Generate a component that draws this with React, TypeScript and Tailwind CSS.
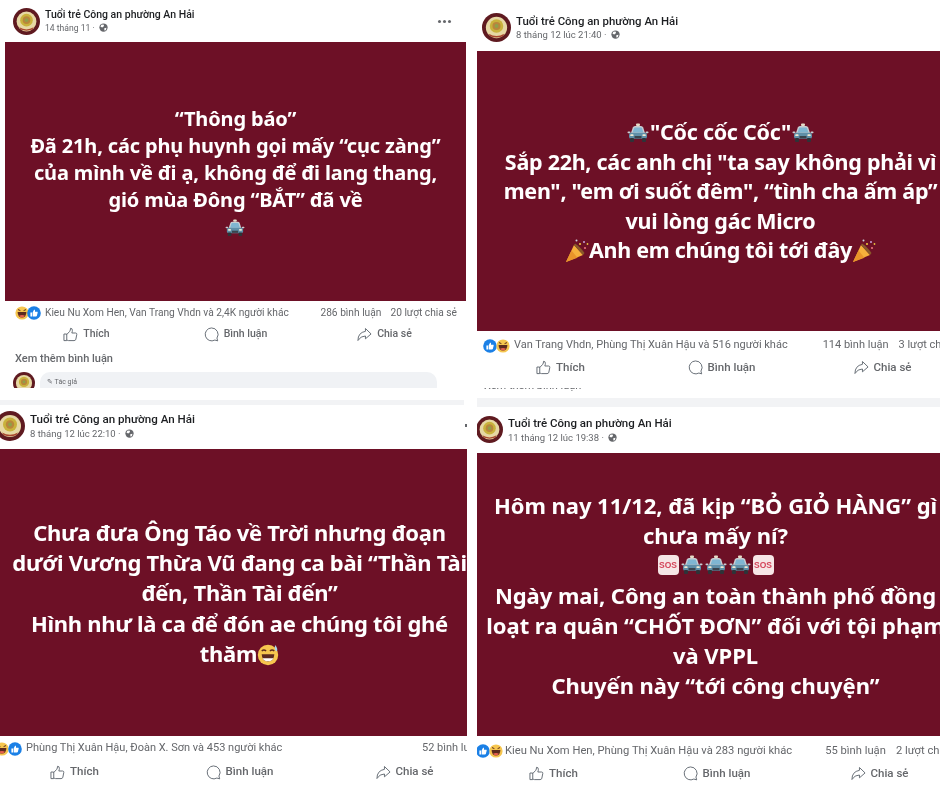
import React from "react";

const Taxi = ({ className = "w-[24px] h-[20px]" }: { className?: string }) => (
  <svg viewBox="0 0 24 20" className={`inline-block align-[-3px] ${className}`}>
    <rect x="10" y="0.5" width="4" height="2.5" rx="1" fill="#e6dcc8" />
    <path d="M5 10 L6.8 4.5 Q7.3 3 9 3 H15 Q16.7 3 17.2 4.5 L19 10 Z" fill="#c9ced2" />
    <path d="M6.6 9.6 L8 5.2 Q8.2 4.4 9 4.4 H15 Q15.8 4.4 16 5.2 L17.4 9.6 Z" fill="#7fb6d2" />
    <rect x="1.5" y="8.6" width="3" height="1.6" rx="0.8" fill="#c9ced2" />
    <rect x="19.5" y="8.6" width="3" height="1.6" rx="0.8" fill="#c9ced2" />
    <rect x="3" y="9.8" width="18" height="6" rx="2" fill="#5f8fa8" />
    <rect x="4" y="15" width="4" height="4" rx="1" fill="#2e3338" />
    <rect x="16" y="15" width="4" height="4" rx="1" fill="#2e3338" />
    <rect x="4.2" y="11.2" width="3.4" height="1.9" rx="0.9" fill="#f0ead2" />
    <rect x="16.4" y="11.2" width="3.4" height="1.9" rx="0.9" fill="#f0ead2" />
    <rect x="8.5" y="13" width="7" height="2.4" fill="#3a444d" />
  </svg>
);

const Popper = () => (
  <svg viewBox="0 0 24 24" className="inline-block w-[24px] h-[24px] align-[-5px]">
    <path d="M1 23 L9 6 L18 16 Z" fill="#f6b13c" />
    <path d="M1 23 L6.5 11.5 L12.5 18.8 Z" fill="#e9942a" />
    <path d="M9 6 L18 16 L19.5 14 Q15 7.5 10 4.5 Z" fill="#8a5a2a" />
    <circle cx="15" cy="5" r="1.1" fill="#e8c23a" />
    <circle cx="20" cy="9" r="1.1" fill="#e8717a" />
    <circle cx="11.5" cy="1.6" r="1" fill="#d0d4e0" />
    <circle cx="19" cy="3" r="1" fill="#c9a0d8" />
    <circle cx="22.5" cy="5" r="0.9" fill="#e8c23a" />
  </svg>
);

const Sos = () => (
  <span className="flex items-center justify-center w-[21px] h-[20px] mx-px bg-[#f6e6e6] rounded-[4px] text-[8.5px] leading-none font-bold text-[#d4455a] font-['Liberation_Sans',sans-serif]">
    SOS
  </span>
);

const Avatar = ({ className }: { className: string }) => (
  <svg viewBox="0 0 30 30" className={`shrink-0 ${className}`}>
    <circle cx="15" cy="15" r="15" fill="#5f1a20" />
    <circle cx="15" cy="15" r="11" fill="#e6d8a4" />
    <circle cx="15" cy="13.5" r="7" fill="#c9b23c" />
    <circle cx="15" cy="13.5" r="4.2" fill="#b9863c" />
    <circle cx="15" cy="13.5" r="2" fill="#8fa04a" />
    <path d="M7 21.5 Q15 26 23 21.5 L21.5 24 Q15 26.5 8.5 24 Z" fill="#a8452e" />
  </svg>
);

const Globe = () => (
  <svg viewBox="0 0 12 12" className="inline-block w-[9px] h-[9px] ml-[2px] align-[-1px]">
    <circle cx="6" cy="6" r="5.5" fill="#65676b" />
    <path d="M3 2.4 L6 2 L6.8 4 L4.4 6 L2 5 Z M7 7 L10 6.4 L9 9.6 L7.2 10 Z" fill="#fff" />
  </svg>
);

const Laugh = ({ className = "" }: { className?: string }) => (
  <svg viewBox="0 0 14 14" className={`w-[14px] h-[14px] shrink-0 ${className}`}>
    <circle cx="7" cy="7" r="6.6" fill="#f6c64f" />
    <path d="M2.6 6 H11.4 Q11.2 11.6 7 11.6 Q2.8 11.6 2.6 6 Z" fill="#5c2a1e" />
    <path d="M4 9.8 Q7 8 10 9.8 Q8.6 11.6 7 11.6 Q5.4 11.6 4 9.8 Z" fill="#e8614f" />
    <path d="M3 3.6 L5.4 4.6 M11 3.6 L8.6 4.6" stroke="#5c2a1e" strokeWidth="1" />
  </svg>
);

const Like = ({ className = "" }: { className?: string }) => (
  <svg viewBox="0 0 14 14" className={`w-[14px] h-[14px] shrink-0 ${className}`}>
    <circle cx="7" cy="7" r="6.8" fill="#1b80e6" />
    <path d="M3.4 6.6 H5 V10.4 H3.4 Z M5.6 6.4 L7.2 3.4 Q8.4 3.6 8 5.8 H10.4 Q10.9 6 10.6 7 L9.8 10 Q9.6 10.4 9 10.4 H5.6 Z" fill="#fff" />
  </svg>
);

const ThumbIcon = () => (
  <svg viewBox="0 0 16 16" className="w-[15px] h-[15px] shrink-0" fill="none" stroke="#606770" strokeWidth="1">
    <path d="M1 7.5 H4 V14.5 H1 Z" />
    <path d="M4 8 L7.2 4.6 Q8 3.4 8 1.4 Q10 1.2 10 3.6 Q10 5 9.4 6.4 H13.4 Q15 6.5 14.7 8 L13.7 13 Q13.4 14.5 11.8 14.5 H6 Q5 14.5 4 13.8" />
  </svg>
);

const CommentIcon = () => (
  <svg viewBox="0 0 16 16" className="w-[15px] h-[15px] shrink-0" fill="none" stroke="#606770" strokeWidth="1">
    <path d="M8 1 A6.9 6.9 0 1 0 11.6 13.9 L14.6 14.8 L13.8 11.8 A6.9 6.9 0 0 0 8 1 Z" />
  </svg>
);

const ShareIcon = () => (
  <svg viewBox="0 0 16 16" className="w-[15px] h-[15px] shrink-0" fill="none" stroke="#606770" strokeWidth="1">
    <path d="M9 1.6 L15 7.4 L9 12.6 V9.6 Q4 9.4 1 14.4 Q1 6 9 4.6 Z" strokeLinejoin="round" />
  </svg>
);

const Action = ({ icon, label, text }: { icon: React.ReactNode; label: string; text: string }) => (
  <div className="flex items-center justify-center gap-[5px]">
    {icon}
    <span className={`font-medium text-[#65676b] whitespace-nowrap ${text}`}>{label}</span>
  </div>
);

const Actions = ({ grid, text }: { grid: string; text: string }) => (
  <div className={`grid ${grid}`}>
    <Action icon={<ThumbIcon />} label="Thích" text={text} />
    <Action icon={<CommentIcon />} label="Bình luận" text={text} />
    <Action icon={<ShareIcon />} label="Chia sẻ" text={text} />
  </div>
);

const Name = ({ text }: { text: string }) => (
  <div className={`font-medium text-[#1c1e21] whitespace-nowrap ${text}`}>Tuổi trẻ Công an phường An Hải</div>
);

const Date_ = ({ label, text = "text-[9.5px]" }: { label: string; text?: string }) => (
  <div className={`leading-[13px] text-[#65676b] whitespace-nowrap ${text}`}>
    {label} · <Globe />
  </div>
);

const Post = ({ className, children }: { className: string; children: React.ReactNode }) => (
  <div className={`bg-white overflow-hidden ${className}`}>{children}</div>
);

const stat = "text-[#65676b] whitespace-nowrap";
const big = "bg-[#6d1026] flex items-center justify-center text-center text-white font-bold font-['Noto_Sans',sans-serif]";

export default function App() {
  return (
    <div className="w-[940px] h-[788px] overflow-hidden bg-white flex font-['Roboto',sans-serif] blur-[0.3px]">
      {/* left column */}
      <div className="w-[467px] shrink-0 flex flex-col">
        <Post className="ml-[5px] w-[461px] h-[388px] rounded-t-[6px]">
          <div className="h-[42px] flex items-center pl-[8px] pr-[15px] gap-[5px]">
            <Avatar className="w-[27px] h-[27px]" />
            <div>
              <Name text="text-[10.5px] leading-[14px]" />
              <Date_ label="14 tháng 11" text="text-[8.6px]" />
            </div>
            <div className="ml-auto flex gap-[2px]">
              <span className="w-[3px] h-[3px] rounded-full bg-[#65676b]" />
              <span className="w-[3px] h-[3px] rounded-full bg-[#65676b]" />
              <span className="w-[3px] h-[3px] rounded-full bg-[#65676b]" />
            </div>
          </div>
          <div className={`${big} h-[259px] text-[20px] tracking-[-0.15px] leading-[27px] pt-[1px]`}>
            <div className="whitespace-nowrap">
              “Thông báo”<br />
              Đã 21h, các phụ huynh gọi mấy “cục zàng”<br />
              của mình về đi ạ, không để đi lang thang,<br />
              gió mùa Đông “BẮT” đã về<br />
              <Taxi className="w-[22px] h-[18px]" />
            </div>
          </div>
          <div className="h-[23px] flex items-center pl-[10px] pt-[1px] text-[10.2px]">
            <Laugh className="w-[13px] h-[13px]" />
            <Like className="-ml-[2px] w-[13px] h-[13px]" />
            <span className={`${stat} ml-[4px]`}>Kieu Nu Xom Hen, Van Trang Vhdn và 2,4K người khác</span>
            <span className={`${stat} ml-auto`}>286 bình luận</span>
            <span className={`${stat} ml-[9px] mr-[9px]`}>20 lượt chia sẻ</span>
          </div>
          <Actions grid="grid-cols-[149px_149px_149px] ml-[7px] h-[20px] items-center" text="text-[10.5px]" />
          <div className="mt-[8px] pl-[10px] text-[11px] leading-[14px] font-medium text-[#65676b]">Xem thêm bình luận</div>
          <div className="mt-[6px] flex pl-[8px] gap-[5px]">
            <Avatar className="w-[22px] h-[22px]" />
            <div className="w-[397px] h-[24px] bg-[#f0f2f5] rounded-[10px] pl-[7px] pt-[4px] text-[7px] leading-[12px] text-[#65676b]">✎ Tác giả</div>
          </div>
        </Post>
        <div className="h-[12px] bg-white" />
        <div className="h-[5px] bg-[#f2f3f5] mr-[3px]" />
        <Post className="flex-1 relative">
          <span className="absolute top-[19px] left-[465px] w-[2px] h-[3px] bg-[#65676b]" />
          <div className="h-[44px] flex items-center -ml-[5px] gap-[5px] pb-[3px]">
            <Avatar className="w-[30px] h-[30px]" />
            <div>
              <Name text="text-[11.6px] leading-[15px]" />
              <Date_ label="8 tháng 12 lúc 22:10" />
            </div>
          </div>
          <div className={`${big} h-[287px] text-[22px] tracking-[-0.3px] leading-[30.3px] pl-[12px]`}>
            <div className="whitespace-nowrap">
              Chưa đưa Ông Táo về Trời nhưng đoạn<br />
              dưới Vương Thừa Vũ đang ca bài “Thần Tài<br />
              đến, Thần Tài đến”<br />
              Hình như là ca để đón ae chúng tôi ghé<br />
              thăm<svg viewBox="0 0 14 14" className="inline-block w-[22px] h-[22px] align-[-4px]">
                <circle cx="7" cy="7" r="6.5" fill="#f6c64f" />
                <path d="M3 6.6 H11 Q10.8 11.2 7 11.2 Q3.2 11.2 3 6.6 Z" fill="#5c2a1e" />
                <path d="M3.6 9 H10.4 Q9.6 11 7 11 Q4.4 11 3.6 9 Z" fill="#fff" />
                <path d="M3 4.4 Q4.4 3.2 5.8 4.4 M8.2 4.4 Q9.6 3.2 11 4.4" stroke="#5c2a1e" strokeWidth="0.9" fill="none" />
                <path d="M11.5 0.6 Q13.6 3 12.6 4.6 Q10.8 4.4 11.5 0.6 Z" fill="#a9d8ea" />
              </svg>
            </div>
          </div>
          <div className="h-[24px] flex items-center -ml-[5px] pt-[1px] text-[11px] overflow-hidden">
            <Laugh />
            <Like className="-ml-[1px]" />
            <span className={`${stat} ml-[4px] w-[396px] shrink-0`}>Phùng Thị Xuân Hậu, Đoàn X. Sơn và 453 người khác</span>
            <span className={stat}>52 bình luận</span>
          </div>
          <Actions grid="grid-cols-[165px_165px_165px] -ml-[8px] mt-[1px] h-[22px] items-center" text="text-[11.5px]" />
        </Post>
      </div>
      <div className="w-[10px] shrink-0 bg-white" />
      {/* right column */}
      <div className="w-[463px] shrink-0 flex flex-col">
        <Post className="h-[395px] mt-[3px]">
          <div className="h-[48px] flex items-center pl-[5px] gap-[5px]">
            <Avatar className="w-[29px] h-[29px]" />
            <div>
              <Name text="text-[11.4px] leading-[14px]" />
              <Date_ label="8 tháng 12 lúc 21:40" />
            </div>
          </div>
          <div className={`${big} h-[280px] text-[21.5px] tracking-[-0.28px] leading-[29.5px] pl-[24px]`}>
            <div className="whitespace-nowrap">
              <Taxi />"Cốc cốc Cốc"<Taxi /><br />
              Sắp 22h, các anh chị "ta say không phải vì<br />
              men", "em ơi suốt đêm", “tình cha ấm áp”<br />
              vui lòng gác Micro<br />
              <Popper />Anh em chúng tôi tới đây<Popper />
            </div>
          </div>
          <div className="h-[27px] flex items-center pl-[6px] pt-[2px] text-[11px] overflow-hidden">
            <Like />
            <Laugh className="-ml-[1px]" />
            <span className={`${stat} ml-[4px]`}>Van Trang Vhdn, Phùng Thị Xuân Hậu và 516 người khác</span>
            <span className={`${stat} ml-[35px]`}>114 bình luận</span>
            <span className={`${stat} ml-[10px]`}>3 lượt chia sẻ</span>
          </div>
          <Actions grid="grid-cols-[161px_161px_161px] ml-[3px] h-[19px] items-center" text="text-[11.5px]" />
          <div className="h-[3px] overflow-hidden mt-[11px] pl-[7px] text-[11px] leading-[14px] text-[#65676b]">
            <div className="-mt-[9px]">Xem thêm bình luận</div>
          </div>
        </Post>
        <div className="h-[9px] bg-[#f2f3f5]" />
        <Post className="flex-1">
          <div className="h-[46px] flex items-center -ml-[1px] gap-[5px] pb-[1px]">
            <Avatar className="w-[27px] h-[27px]" />
            <div>
              <Name text="text-[11.5px] leading-[15px]" />
              <Date_ label="11 tháng 12 lúc 19:38" />
            </div>
          </div>
          <div className={`${big} h-[283px] text-[22px] tracking-[-0.05px] leading-[30px] pl-[14px] pt-[1px]`}>
            <div className="whitespace-nowrap">
              Hôm nay 11/12, đã kịp “BỎ GIỎ HÀNG” gì<br />
              chưa mấy ní?<br />
              <div className="h-[30px] flex items-center justify-center">
                <Sos /><Taxi /><Taxi /><Taxi /><Sos />
              </div>
              Ngày mai, Công an toàn thành phố đồng<br />
              loạt ra quân “CHỐT ĐƠN” đối với tội phạm<br />
              và VPPL<br />
              Chuyến này “tới công chuyện”
            </div>
          </div>
          <div className="h-[28px] flex items-center -ml-[1px] pt-[2px] text-[11.2px] overflow-hidden">
            <Like />
            <Laugh className="-ml-[1px]" />
            <span className={`${stat} ml-[2px]`}>Kieu Nu Xom Hen, Phùng Thị Xuân Hậu và 283 người khác</span>
            <span className={`${stat} ml-[33px]`}>55 bình luận</span>
            <span className={`${stat} ml-[10px]`}>2 lượt chia sẻ</span>
          </div>
          <Actions grid="grid-cols-[163px_163px_163px] -ml-[5px] h-[19px] items-center" text="text-[11.5px]" />
        </Post>
      </div>
    </div>
  );
}
